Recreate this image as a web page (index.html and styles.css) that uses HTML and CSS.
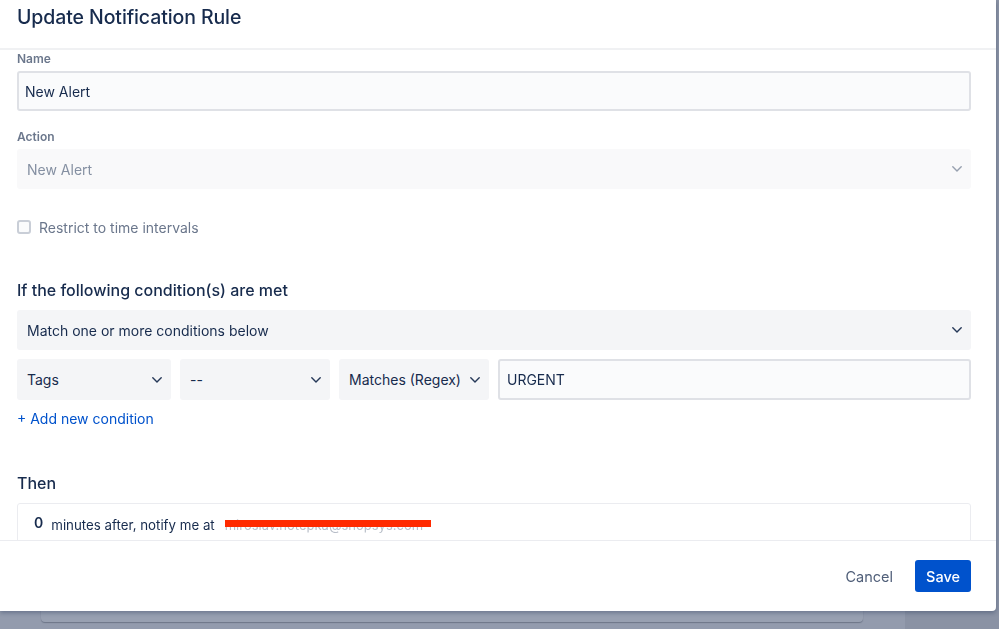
FILE: index.html
```html
<!DOCTYPE html>
<html lang="en">
  <head>
    <meta charset="UTF-8" />
    <meta name="viewport" content="width=device-width, initial-scale=1.0" />
    <title>Update Notification Rule</title>
    <link rel="stylesheet" href="styles.css">
  </head>
  <body>
    <div class="page">
      <div class="page-main">
        <div class="page-card"></div>
      </div>
      <div class="page-side"></div>
    </div>

    <div class="overlay">
      <div class="modal">
        <div class="modal-header">
          <h1>Update Notification Rule</h1>
        </div>

        <div class="modal-body">
          <label class="field-label">Name</label>
          <div class="text-input">New Alert</div>

          <label class="field-label spaced">Action</label>
          <div class="select select-disabled">
            <span>New Alert</span>
            <svg class="chevron" viewBox="0 0 10 6"><polyline points="0.8,0.8 5,5 9.2,0.8" /></svg>
          </div>

          <div class="checkbox-row">
            <span class="checkbox"></span>
            <span>Restrict to time intervals</span>
          </div>

          <h2 class="section-title conditions">If the following condition(s) are met</h2>
          <div class="select">
            <span>Match one or more conditions below</span>
            <svg class="chevron" viewBox="0 0 10 6"><polyline points="0.8,0.8 5,5 9.2,0.8" /></svg>
          </div>

          <div class="condition-row">
            <div class="select">
              <span>Tags</span>
              <svg class="chevron" viewBox="0 0 10 6"><polyline points="0.8,0.8 5,5 9.2,0.8" /></svg>
            </div>
            <div class="select">
              <span>--</span>
              <svg class="chevron" viewBox="0 0 10 6"><polyline points="0.8,0.8 5,5 9.2,0.8" /></svg>
            </div>
            <div class="select">
              <span>Matches (Regex)</span>
              <svg class="chevron" viewBox="0 0 10 6"><polyline points="0.8,0.8 5,5 9.2,0.8" /></svg>
            </div>
            <div class="text-input">URGENT</div>
          </div>

          <a class="add-link" href="#">+ Add new condition</a>

          <h2 class="section-title then">Then</h2>
          <div class="action-card">
            <span class="minutes">0</span>
            <span>minutes after, notify me at</span>
            <span class="email"><span class="email-text">miroslav.notepka@shopsys.com</span></span>
          </div>
        </div>

        <div class="modal-footer">
          <button class="btn btn-subtle">Cancel</button>
          <button class="btn btn-primary">Save</button>
        </div>
      </div>
    </div>
  </body>
</html>
```

FILE: styles.css
```css
html, body {
  height: 100%;
  margin: 0;
  padding: 0;
}
body {
  overflow: hidden;
  font-family: 'Inter', 'Noto Sans', 'Liberation Sans', sans-serif;
  color: #172b4d;
  background: #939bad;
}

/* page behind the dialog */
.page {
  display: flex;
  height: 100%;
}
.page-main {
  flex: 0 0 905px;
  padding: 0 42px 0 41px;
  box-sizing: border-box;
}
.page-card {
  height: 622px;
  border-radius: 0 0 4px 4px;
  background: #98a0b1;
  box-shadow: 0 1px 1px rgba(40, 50, 70, 0.35);
}
.page-side {
  flex: 1;
  background: #8a92a4;
}

.overlay {
  position: fixed;
  top: 0; left: 0; right: 0; bottom: 0;
}
.modal {
  width: 996px;
  height: 611px;
  background: #fff;
  border-radius: 0 0 4px 0;
  box-shadow: 0 2px 4px rgba(9, 30, 66, 0.3);
  display: flex;
  flex-direction: column;
  overflow: hidden;
}

.modal-header {
  height: 48px;
  flex-shrink: 0;
  padding: 0 17px;
  border-bottom: 2px solid #f0f1f3;
  display: flex;
  align-items: flex-start;
}
.modal-header h1 {
  margin: 5px 0 0;
  font-size: 19.5px;
  line-height: 24px;
  font-weight: 500;
  letter-spacing: -0.1px;
  color: #172b4d;
}

.modal-body {
  flex: 1;
  overflow: hidden;
  padding: 1px 25px 0 17px;
  display: flex;
  flex-direction: column;
  align-items: stretch;
}
.modal-body > * {
  flex-shrink: 0;
}

.field-label {
  font-size: 12px;
  line-height: 16px;
  font-weight: 600;
  color: #6b778c;
  margin-bottom: 4px;
}
.field-label.spaced {
  margin-top: 18px;
}

.text-input {
  height: 40px;
  box-sizing: border-box;
  border: 2px solid #dfe1e6;
  border-radius: 3px;
  background: #fafbfc;
  padding: 0 6px;
  font-size: 14px;
  display: flex;
  align-items: center;
  color: #172b4d;
}

.select {
  height: 40px;
  box-sizing: border-box;
  border-radius: 3px;
  background: #f4f5f7;
  padding: 0 9px 0 10px;
  font-size: 14px;
  display: flex;
  align-items: center;
  justify-content: space-between;
  color: #172b4d;
}
.select-disabled {
  background: #f9f9fa;
  color: #8590a2;
}
.chevron {
  width: 10px;
  height: 6px;
  fill: none;
  stroke: #253858;
  stroke-width: 1.4;
  stroke-linecap: round;
  stroke-linejoin: round;
}
.select-disabled .chevron {
  stroke: #97a0af;
}

.checkbox-row {
  margin-top: 28px;
  height: 20px;
  display: flex;
  align-items: center;
  gap: 8px;
  font-size: 14px;
  color: #6b778c;
}
.checkbox {
  width: 14px;
  height: 14px;
  box-sizing: border-box;
  border: 2px solid #c9ced7;
  border-radius: 3px;
  background: #fafbfc;
}

.section-title {
  margin: 0 0 10px;
  font-size: 16px;
  line-height: 20px;
  font-weight: 500;
  color: #172b4d;
}
.section-title.conditions {
  margin-top: 43px;
}
.section-title.then {
  margin-top: 44px;
}

.condition-row {
  margin-top: 9px;
  display: grid;
  grid-template-columns: 154px 150px 150px 1fr;
  gap: 9px;
}
.condition-row .select,
.condition-row .text-input {
  height: 41px;
}
.condition-row .text-input {
  padding: 0 7px;
}

.add-link {
  margin-top: 9px;
  align-self: flex-start;
  font-size: 14px;
  line-height: 20px;
  color: #0052cc;
  text-decoration: none;
}

.action-card {
  border: 1px solid #ebecf0;
  border-radius: 3px;
  height: 60px;
  box-sizing: border-box;
  padding: 11px 16px 0;
  display: flex;
  align-items: flex-start;
  font-size: 13.3px;
  line-height: 20px;
}
.minutes {
  font-weight: 600;
  font-size: 14px;
  margin-right: 8px;
  margin-top: -2px;
}
.email {
  position: relative;
  margin-left: 10px;
  display: inline-block;
}
.email-text {
  color: #8993a4;
  opacity: 0.6;
  font-size: 13px;
}
.email::after {
  content: '';
  position: absolute;
  left: 0;
  top: 5px;
  width: 206px;
  height: 7px;
  background: #ff2a00;
}

.modal-footer {
  height: 70px;
  flex-shrink: 0;
  border-top: 1px solid #ebecf0;
  padding: 0 25px 0 0;
  display: flex;
  align-items: center;
  justify-content: flex-end;
  gap: 12px;
}
.btn {
  font-family: inherit;
  font-size: 14.5px;
  height: 32px;
  border: none;
  border-radius: 3px;
  padding: 0 10px;
  cursor: pointer;
}
.btn-subtle {
  background: none;
  color: #505f79;
}
.btn-primary {
  width: 56px;
  background: #0052cc;
  color: #fff;
  font-weight: 500;
}
```
